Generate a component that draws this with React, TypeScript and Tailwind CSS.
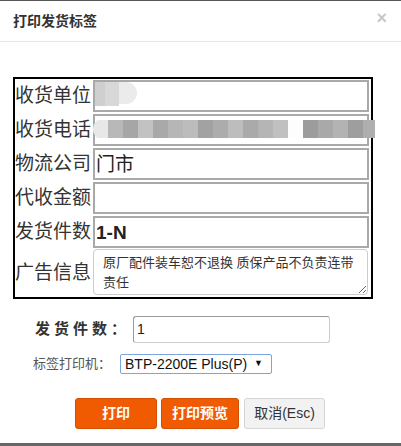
import React from "react";

const font = { fontFamily: '"Liberation Sans", "Noto Sans CJK SC", sans-serif' };

const phoneBlocks = [
  "#e8e8e8", "#b8b8b8", "#a6a6a6", "#c2c2c2", "#a9a9a9", "#b6b6b6", "#bcbcbc", "#a2a2a2",
  "#acacac", "#bdbdbd", "#aaaaaa", "#b5b5b5", "#c0c0c0", "#fdfdfd", "#9c9c9c", "#a9a9a9",
  "#b3b3b3", "#9e9e9e", "#afafaf", "#c8c8c8",
];

function Row({ label, children }: { label: string; children?: React.ReactNode }) {
  return (
    <div className="flex items-center h-[34px]">
      <div className="w-[78px] text-[19px] leading-none text-[#333] whitespace-nowrap -mt-[2px]">{label}</div>
      <div className="relative w-[276px] h-[32px] border-2 border-[#a9a9a9] bg-white flex items-center px-[1px]">
        {children}
      </div>
    </div>
  );
}

export default function App() {
  return (
    <div style={font} className="w-[401px] h-[446px] bg-white border-t border-[#555] border-b-[3px] border-b-[#666] flex flex-col overflow-hidden">
      <div className="h-[41px] shrink-0 border-b border-[#e5e5e5] flex items-center justify-between pl-[13px] pr-[14px]">
        <span className="text-[14px] font-bold text-[#333]">打印发货标签</span>
        <span className="text-[18px] font-bold text-[#c8c8c8] leading-none -mt-[6px]">×</span>
      </div>

      <div className="mt-[35px] ml-[13px] w-[360px] border-2 border-black">
        <Row label="收货单位">
          <div className="absolute left-0 top-0 flex">
            <div className="w-[10px] h-[24px] bg-[#cfcfcf]" />
            <div className="w-[14px] h-[24px] bg-[#d8d8d8]" />
            <div className="w-[18px] h-[22px] bg-[#ebebeb] rounded-r-full" />
          </div>
        </Row>
        <Row label="收货电话">
          <div className="absolute -left-[2px] top-[2px] right-[-8px] h-[22px] flex items-center overflow-hidden rounded-l-full">
            {phoneBlocks.map((c, i) => (
              <div key={i} className="w-[15px] h-[18px] shrink-0" style={{ backgroundColor: c }} />
            ))}
          </div>
        </Row>
        <Row label="物流公司">
          <span className="text-[19px] text-[#222] leading-none">门市</span>
        </Row>
        <Row label="代收金额" />
        <Row label="发货件数">
          <span className="text-[19px] font-bold text-[#222] leading-none">1-N</span>
        </Row>
        <div className="flex items-center h-[48px] pb-[2px]">
          <div className="w-[78px] text-[19px] leading-none text-[#333] whitespace-nowrap">广告信息</div>
          <textarea
            readOnly
            defaultValue="原厂配件装车恕不退换 质保产品不负责连带责任"
            className="w-[275px] h-[46px] border border-[#ccc] rounded-[4px] px-[9px] pt-[3px] text-[13px] leading-[20px] text-[#333] outline-none"
            style={font}
          />
        </div>
      </div>

      <div className="flex items-center mt-[17px] ml-[35px]">
        <span className="text-[15px] font-bold text-[#333] tracking-[4px] w-[98px]">发货件数：</span>
        <div className="w-[197px] h-[27px] border border-[#ccc] border-t-[#999] border-l-[#999] rounded-[3px] flex items-center px-[3px] text-[14px] text-[#222]">
          1
        </div>
      </div>

      <div className="flex items-center mt-[11px] ml-[33px]">
        <span className="text-[13px] text-[#555] w-[87px]">标签打印机：</span>
        <div className="w-[152px] h-[20px] border border-[#7ea4de] rounded-[2px] flex items-center justify-between pl-[4px] pr-[8px] text-[14px] text-[#111]">
          <span>BTP-2200E Plus(P)</span>
          <span className="text-[9px]">▼</span>
        </div>
      </div>

      <div className="flex mt-[24px] ml-[75px] gap-[4px]">
        <button className="w-[82px] h-[31px] bg-[#f05a00] border border-[#d24e00] rounded-[3px] text-white text-[14px] font-bold">打印</button>
        <button className="w-[78px] h-[31px] bg-[#f05a00] border border-[#d24e00] rounded-[3px] text-white text-[14px] font-bold">打印预览</button>
        <button className="w-[81px] h-[31px] bg-[#f2f2f2] border border-[#d5d5d5] rounded-[3px] text-[#333] text-[14px] ml-[1px]">取消(Esc)</button>
      </div>
    </div>
  );
}
